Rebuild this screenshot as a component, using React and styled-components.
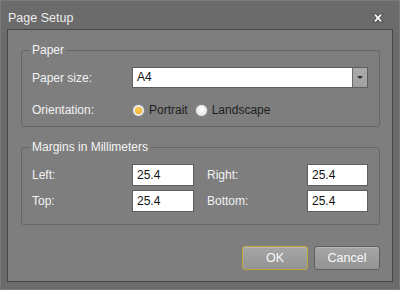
import styled, { createGlobalStyle } from "styled-components";

const Global = createGlobalStyle`
  html, body { margin: 0; padding: 0; background: #6b6b6b; }
  * { box-sizing: border-box; }
`;

const Window = styled.div`
  width: 400px;
  height: 290px;
  background: #6b6b6b;
  border: 1px solid #7a7a7a;
  display: flex;
  flex-direction: column;
  font-family: "Liberation Sans", Arial, sans-serif;
  font-size: 12px;
  color: #f2f2f2;
`;

const TitleBar = styled.div`
  height: 28px;
  display: flex;
  align-items: center;
  justify-content: space-between;
  padding: 6px 15px 0 7px;
  font-size: 12.5px;
  color: #ececec;
`;

const CloseButton = styled.button`
  border: 0;
  padding: 0;
  background: none;
  display: flex;
  width: 12px;
  height: 10px;
`;

const Panel = styled.div`
  flex: 1;
  margin: 0 6px 7px 6px;
  background: #7e7e7e;
  border: 1px solid #464646;
  padding: 12px 12px 11px 13px;
  display: flex;
  flex-direction: column;
`;

const Group = styled.fieldset`
  margin: 0 0 ${(p) => p.$gap || 0}px 0;
  border: 1px solid #666666;
  border-radius: 3px;
  padding: ${(p) => p.$pad};
  min-width: 0;
`;

const Legend = styled.legend`
  padding: 0 2px;
  margin-left: -2px;
  line-height: 16px;
  color: #f4f4f4;
`;

const FormGrid = styled.div`
  display: grid;
  grid-template-columns: ${(p) => p.$cols};
  row-gap: ${(p) => p.$rowGap}px;
  align-items: center;
`;

const Label = styled.span`
  line-height: 16px;
  padding-left: ${(p) => p.$indent || 0}px;
`;

const Select = styled.div`
  height: 21px;
  background: #fff;
  border: 1px solid #5e5e5e;
  display: flex;
  align-items: stretch;
  color: #111;
`;

const SelectValue = styled.span`
  flex: 1;
  padding-left: 4px;
  line-height: 19px;
`;

const Arrow = styled.span`
  width: 15px;
  background: linear-gradient(#ababab, #a0a0a0);
  border-left: 1px solid #6c6c6c;
  display: flex;
  align-items: center;
  justify-content: center;

  &::after {
    content: "";
    border-left: 3px solid transparent;
    border-right: 3px solid transparent;
    border-top: 3px solid #2e2e2e;
  }
`;

const RadioRow = styled.div`
  height: 20px;
  display: flex;
  align-items: center;
`;

const RadioOption = styled.label`
  display: flex;
  align-items: center;
  gap: 4px;
  margin-right: 7px;
  color: #1e1e1e;
`;

const RadioDot = styled.span`
  width: 13px;
  height: 13px;
  border-radius: 50%;
  border: 1px solid #8a8a8a;
  background: radial-gradient(circle at 50% 40%, #ffffff 0%, #e4e4e4 70%, #c8c8c8 100%);
  display: flex;
  align-items: center;
  justify-content: center;

  &::after {
    content: "";
    width: 7px;
    height: 7px;
    border-radius: 50%;
    background: radial-gradient(circle at 45% 40%, #ffd060, #f0a010);
    display: ${(p) => (p.$checked ? "block" : "none")};
  }
`;

const NumberBox = styled.div`
  height: 22px;
  background: #fff;
  border: 1px solid #5e5e5e;
  padding-left: 4px;
  line-height: 20px;
  color: #111;
`;

const Footer = styled.div`
  margin-top: auto;
  display: flex;
  justify-content: flex-end;
  gap: 6px;
`;

const Button = styled.button`
  width: 66px;
  height: 24px;
  border-radius: 3px;
  border: 1px solid ${(p) => (p.$primary ? "#c2a83e" : "#5e5e5e")};
  background: linear-gradient(#a6a6a6, #939393);
  box-shadow: inset 0 1px 0 rgba(255, 255, 255, 0.18);
  color: #fafafa;
  font-family: inherit;
  font-size: 12.5px;
  padding: 0 0 1px;
`;

const margins = [
  ["Left:", "25.4", "Right:", "25.4"],
  ["Top:", "25.4", "Bottom:", "25.4"],
];

export default function App() {
  return (
    <>
      <Global />
      <Window>
        <TitleBar>
          <span>Page Setup</span>
          <CloseButton aria-label="Close">
            <svg width="12" height="10" viewBox="0 0 13 11">
              <path
                d="M1 1 H4.5 L6.5 3.5 L8.5 1 H12 L8.5 5.5 L12 10 H8.5 L6.5 7.5 L4.5 10 H1 L4.5 5.5 Z"
                fill="#f6f6f6"
                stroke="#3c3c3c"
                strokeWidth="0.9"
                strokeLinejoin="round"
              />
            </svg>
          </CloseButton>
        </TitleBar>
        <Panel>
          <Group $gap={12} $pad="9px 11px 6px 10px">
            <Legend>Paper</Legend>
            <FormGrid $cols="100px 1fr" $rowGap={12}>
              <Label>Paper size:</Label>
              <Select>
                <SelectValue>A4</SelectValue>
                <Arrow />
              </Select>
              <Label>Orientation:</Label>
              <RadioRow>
                <RadioOption>
                  <RadioDot $checked />
                  Portrait
                </RadioOption>
                <RadioOption>
                  <RadioDot />
                  Landscape
                </RadioOption>
              </RadioRow>
            </FormGrid>
          </Group>
          <Group $pad="9px 11px 12px 10px">
            <Legend>Margins in Millimeters</Legend>
            <FormGrid $cols="100px 62px 1fr 61px" $rowGap={4}>
              {margins.map(([l, lv, r, rv]) => [
                <Label key={l}>{l}</Label>,
                <NumberBox key={l + "v"}>{lv}</NumberBox>,
                <Label key={r} $indent={13}>{r}</Label>,
                <NumberBox key={r + "v"}>{rv}</NumberBox>,
              ])}
            </FormGrid>
          </Group>
          <Footer>
            <Button $primary>OK</Button>
            <Button>Cancel</Button>
          </Footer>
        </Panel>
      </Window>
    </>
  );
}
